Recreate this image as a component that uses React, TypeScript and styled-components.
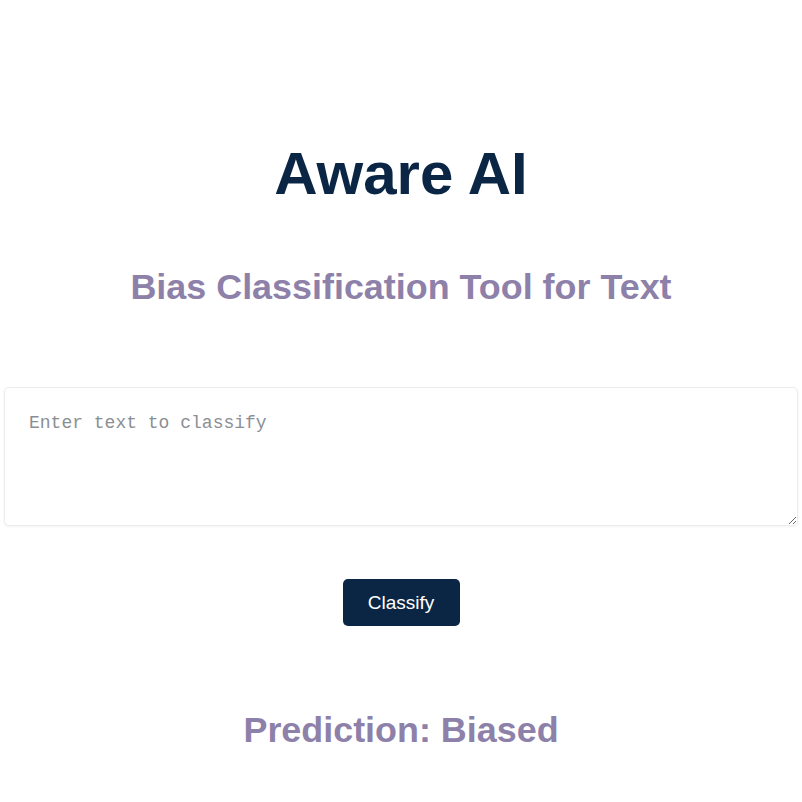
import React from "react";
import styled, { createGlobalStyle } from "styled-components";

const GlobalStyle = createGlobalStyle`
  html, body {
    margin: 0;
    padding: 0;
    background: #ffffff;
  }
  body {
    font-family: "Liberation Sans", Arial, sans-serif;
  }
  * { box-sizing: border-box; }
`;

const Page = styled.main`
  display: flex;
  flex-direction: column;
  align-items: center;
  padding: 139px 4px 0 4px;
  width: 100%;
`;

const Title = styled.h1`
  margin: 0;
  font-family: "Liberation Sans", Arial, sans-serif;
  font-size: 60px;
  line-height: 1.15;
  font-weight: 700;
  color: #0b2545;
  text-align: center;
`;

const Heading = styled.h2<{ $top: number }>`
  margin: ${(p) => p.$top}px 0 0 0;
  font-family: "Liberation Sans", Arial, sans-serif;
  font-size: 35.9px;
  line-height: 1.15;
  font-weight: 700;
  color: #8d81aa;
  text-align: center;
`;

const TextInput = styled.textarea`
  display: block;
  width: 100%;
  height: 139px;
  margin-top: 79px;
  padding: 25px 24px;
  border: 1px solid #ececec;
  border-radius: 5px;
  box-shadow: 0 1px 3px rgba(0, 0, 0, 0.05);
  font-family: "Liberation Mono", "DejaVu Sans Mono", monospace;
  font-size: 18px;
  line-height: 20px;
  color: #333;
  outline: none;
  &::placeholder {
    color: #8a8f94;
  }
`;

const Button = styled.button`
  margin-top: 53px;
  width: 117px;
  height: 47px;
  border: none;
  border-radius: 5px;
  background: #0b2545;
  color: #ffffff;
  font-family: "Liberation Sans", Arial, sans-serif;
  font-size: 19px;
  cursor: pointer;
`;

export default function App() {
  return (
    <>
      <GlobalStyle />
      <Page>
        <Title>Aware AI</Title>
        <Heading $top={59}>Bias Classification Tool for Text</Heading>
        <TextInput placeholder="Enter text to classify" />
        <Button>Classify</Button>
        <Heading $top={84}>Prediction: Biased</Heading>
      </Page>
    </>
  );
}
